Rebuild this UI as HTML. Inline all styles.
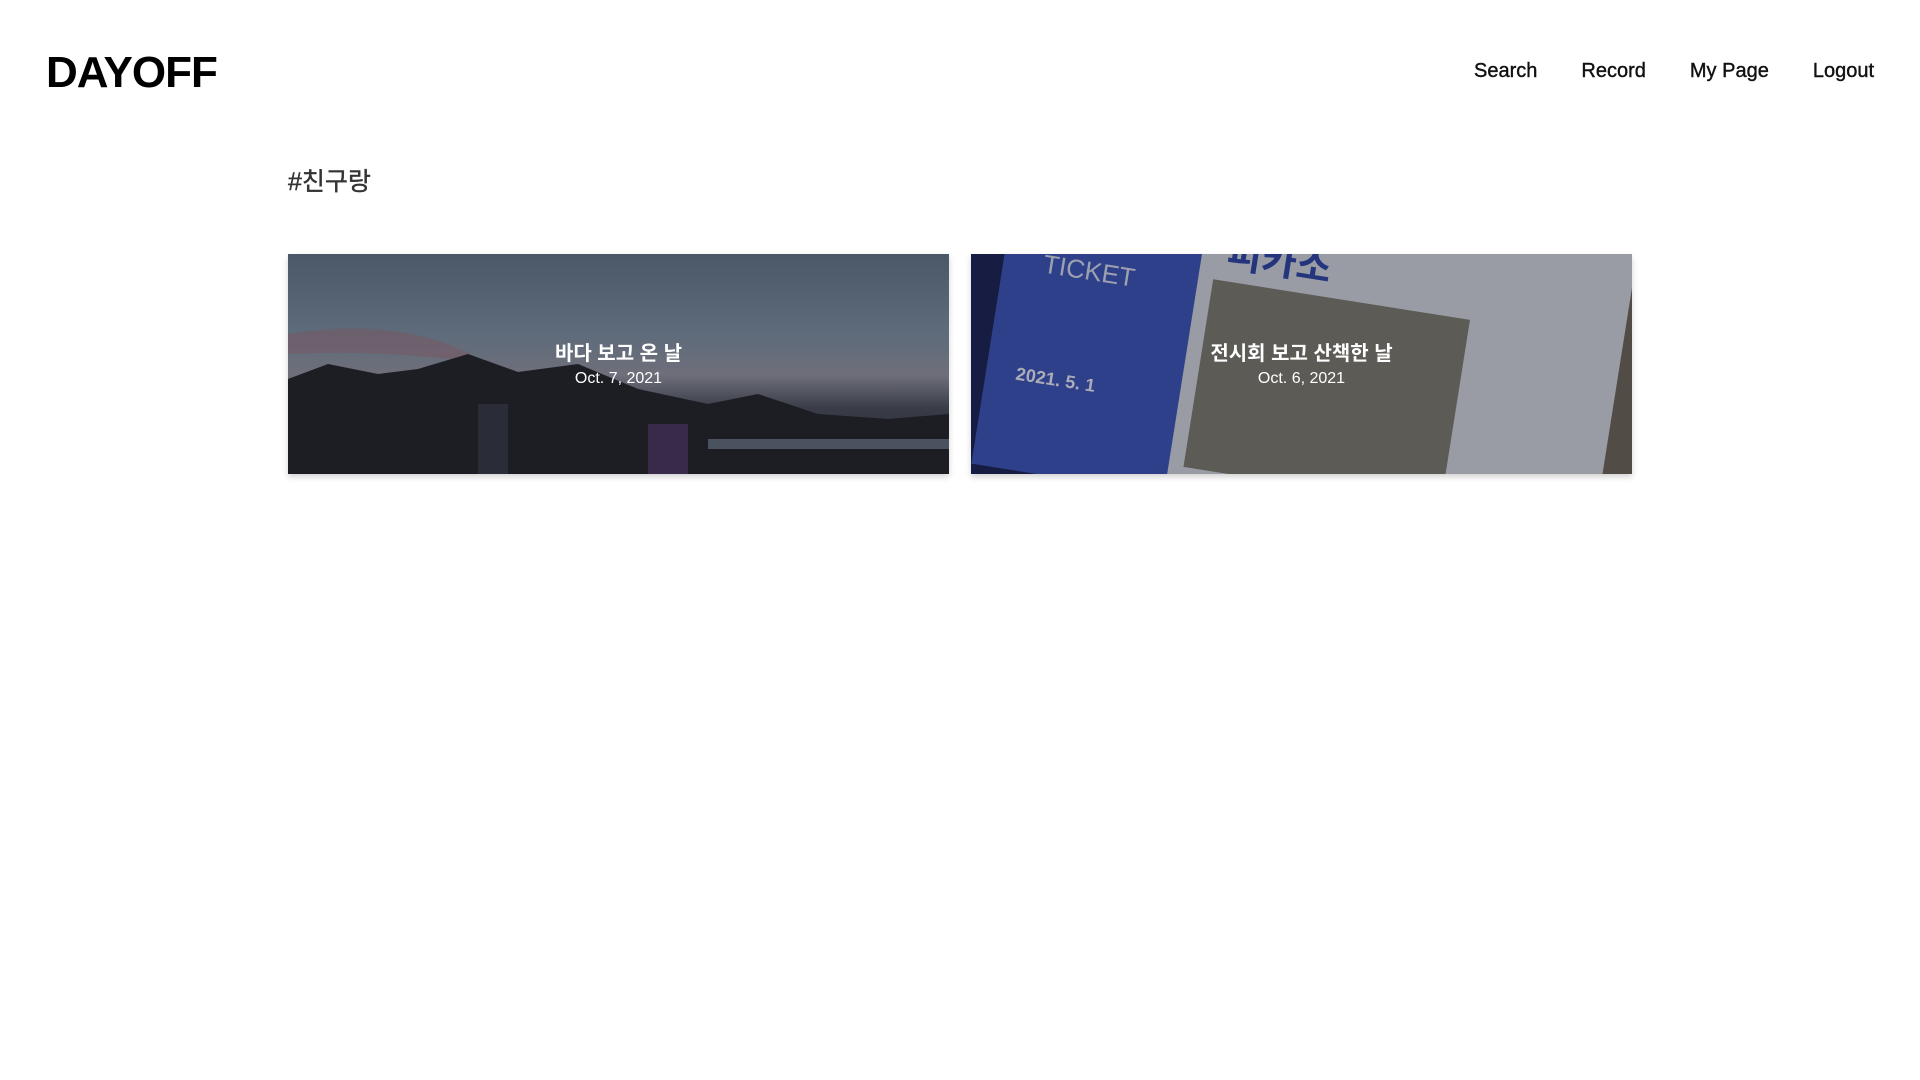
<!DOCTYPE html>
<html><head><meta charset="utf-8"><style>
*{margin:0;padding:0;box-sizing:border-box}
body{width:1920px;height:1080px;background:#fff;font-family:"Liberation Sans","Noto Sans CJK KR",sans-serif;color:#111;position:relative;overflow:hidden}
.logo{position:absolute;left:46px;top:48px;font-size:44px;font-weight:bold;letter-spacing:-1px;color:#000}
nav{position:absolute;top:60px;right:46px;display:flex;gap:44px;font-size:20px;-webkit-text-stroke:0.4px #111}
.tag{position:absolute;left:288px;top:162px;font-size:25px;color:#333;-webkit-text-stroke:0.4px #333}
.card{position:absolute;top:254px;width:661px;height:220px;overflow:hidden;box-shadow:0 3px 6px rgba(0,0,0,.18)}
.card .t{position:absolute;left:0;right:0;top:83px;text-align:center;color:#fff;font-size:20px;font-weight:bold}
.card .d{position:absolute;left:0;right:0;top:116px;text-align:center;color:#fff;font-size:16px}
.c1{left:288px;background:linear-gradient(180deg,#4b5868 0%,#5d6b7b 35%,#6e6f7a 55%,#3a3d48 70%,#1f2229 100%)}
.c2{left:971px;background:#2e3e8a}
</style></head><body>
<div class="logo">DAYOFF</div>
<nav><span>Search</span><span>Record</span><span>My Page</span><span>Logout</span></nav>
<div class="tag">#친구랑</div>
<div class="card c1">
<svg width="661" height="220" style="position:absolute;left:0;top:0">
<path d="M0 80 Q120 60 200 110 Q100 95 0 100Z" fill="#7a5560" opacity=".5"/>
<path d="M0 125 L40 110 L90 120 L130 115 L180 100 L230 118 L290 110 L350 135 L420 150 L470 140 L530 160 L600 165 L661 160 L661 220 L0 220Z" fill="#1c1e24"/>
<rect x="190" y="150" width="30" height="70" fill="#2a2d38"/>
<rect x="360" y="170" width="40" height="50" fill="#3a2a4a"/>
<rect x="420" y="185" width="241" height="10" fill="#4a5260"/>
</svg>
<div class="t">바다 보고 온 날</div><div class="d">Oct. 7, 2021</div></div>
<div class="card c2">
<svg width="661" height="220" style="position:absolute;left:0;top:0">
<rect width="661" height="220" fill="#1d2555"/>
<rect x="540" y="0" width="121" height="220" fill="#6a625a"/>
<g transform="rotate(9 330 110)">
<rect x="20" y="-60" width="200" height="320" fill="#3b52b0"/>
<rect x="215" y="-60" width="430" height="320" fill="#c4c8d2"/>
<rect x="230" y="40" width="260" height="190" fill="#77756f"/>
<text x="240" y="25" font-size="38" font-weight="bold" fill="#2f44a0" font-family="Noto Sans CJK KR">피카소</text>
<text x="60" y="60" font-size="26" fill="#c8cde0">TICKET</text>
<text x="50" y="170" font-size="18" font-weight="bold" fill="#dde">2021. 5. 1</text>
</g>
<rect width="661" height="220" fill="rgba(0,0,0,.22)"/>
</svg>
<div class="t">전시회 보고 산책한 날</div><div class="d">Oct. 6, 2021</div></div>
</body></html>
